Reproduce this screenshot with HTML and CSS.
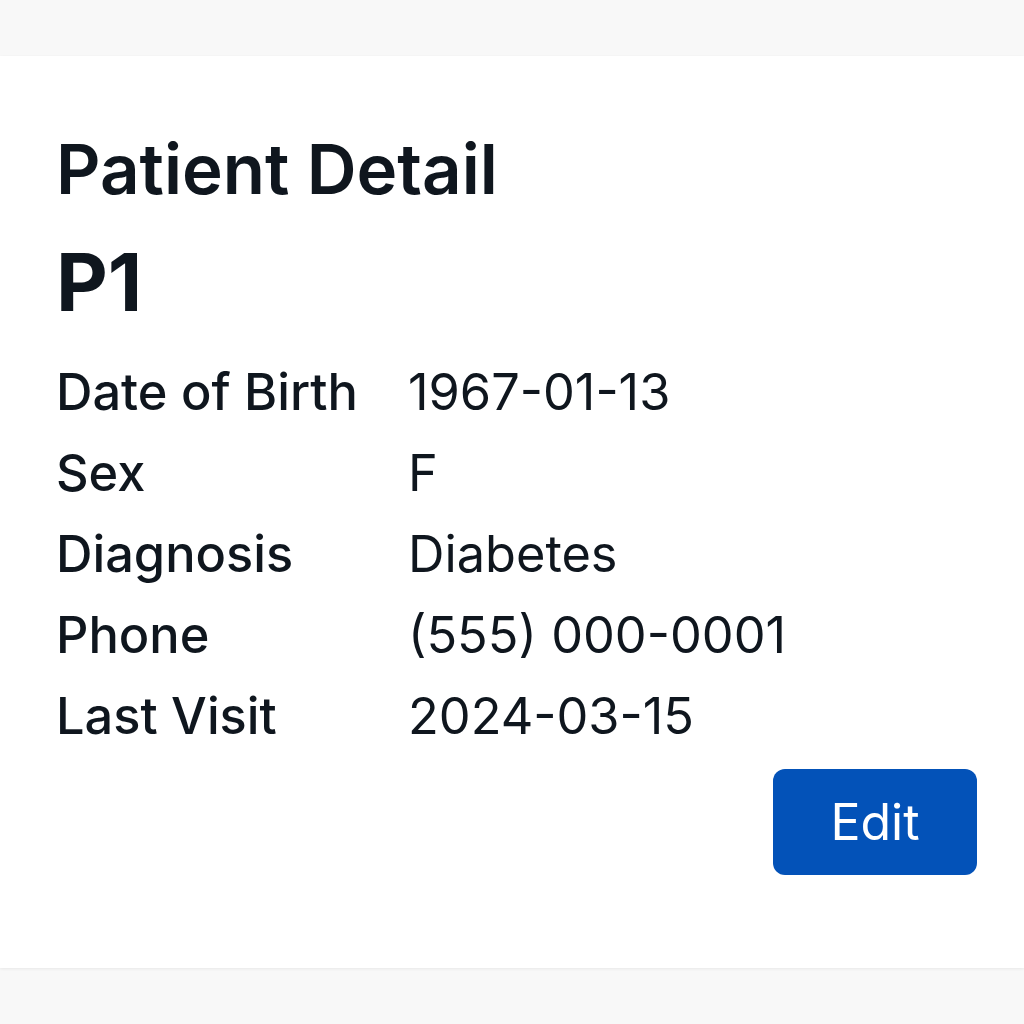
FILE: index.html
```html
<!DOCTYPE html>
<html lang="en">
<head>
<meta charset="utf-8">
<title>Patient Detail</title>
<link rel="stylesheet" href="styles.css">
</head>
<body>
<main class="card">
  <h1 class="title">Patient Detail</h1>
  <h2 class="pid">P1</h2>
  <dl class="details">
    <dt>Date of Birth</dt><dd>1967-01-13</dd>
    <dt>Sex</dt><dd>F</dd>
    <dt>Diagnosis</dt><dd>Diabetes</dd>
    <dt>Phone</dt><dd>(555) 000-0001</dd>
    <dt>Last Visit</dt><dd>2024-03-15</dd>
  </dl>
  <div class="actions">
    <button class="btn" type="button">Edit</button>
  </div>
</main>
</body>
</html>
```
FILE: styles.css
```css
html, body {
  margin: 0;
  padding: 0;
}
body {
  background: #f8f8f8;
  font-family: Inter, "Noto Sans", "Liberation Sans", sans-serif;
  color: #0f161e;
  min-height: 1024px;
  padding-top: 56px;
  box-sizing: border-box;
}
.card {
  background: #ffffff;
  box-shadow: 0 1px 3px rgba(0, 0, 0, 0.07);
  padding: 72px 47px 93px 56px;
}
.title {
  margin: 0;
  font-size: 69px;
  line-height: 1.2;
  font-weight: 600;
}
.pid {
  margin: 23px 0 0;
  font-size: 80px;
  line-height: 1.2;
  font-weight: 700;
}
.details {
  margin: 21px 0 0;
  display: grid;
  grid-template-columns: 352px 1fr;
  grid-auto-rows: 81px;
  font-size: 50.5px;
  line-height: 81px;
}
.details dt {
  font-weight: 500;
}
.details dd {
  margin: 0;
  font-weight: 400;
}
.actions {
  display: flex;
  justify-content: flex-end;
  margin-top: 13px;
}
.btn {
  width: 204px;
  height: 106px;
  border: none;
  border-radius: 12px;
  background: #0352b8;
  color: #ffffff;
  font-family: inherit;
  font-size: 50px;
  font-weight: 400;
}
```
